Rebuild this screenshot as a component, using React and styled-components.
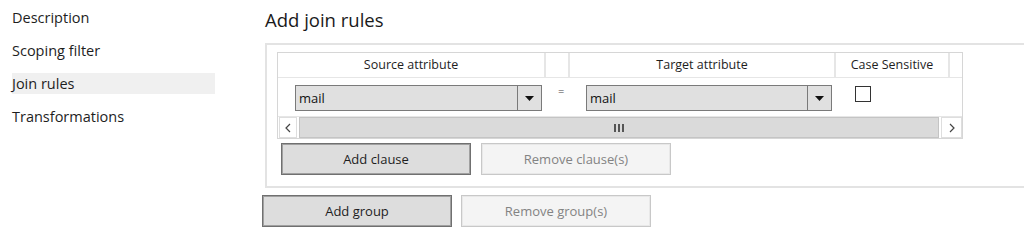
import React from 'react'
import styled, { createGlobalStyle } from 'styled-components'

const GlobalStyle = createGlobalStyle`
  body {
    margin: 0;
    background: #ffffff;
    font-family: "Open Sans", "Noto Sans", sans-serif;
    color: #1e1e1e;
  }
`

const navItems = ['Description', 'Scoping filter', 'Join rules', 'Transformations']

function Combo({ value }) {
  return (
    <ComboBox>
      <span>{value}</span>
      <ComboArrow>
        <svg width="9" height="5" viewBox="0 0 9 5">
          <path d="M0 0 H9 L4.5 5 Z" fill="#111" />
        </svg>
      </ComboArrow>
    </ComboBox>
  )
}

function App() {
  return (
    <Page>
      <GlobalStyle />
      <Sidebar>
        {navItems.map(item => (
          <NavItem key={item} active={item === 'Join rules'}>{item}</NavItem>
        ))}
      </Sidebar>
      <Main>
        <Title>Add join rules</Title>
        <GroupBox>
          <Grid>
            <HeaderRow>
              <HeaderCell>Source attribute</HeaderCell>
              <HeaderCell />
              <HeaderCell>Target attribute</HeaderCell>
              <HeaderCell>Case Sensitive</HeaderCell>
              <HeaderCell />
            </HeaderRow>
            <DataRow>
              <SourceCell><Combo value="mail" /></SourceCell>
              <EqualsCell>=</EqualsCell>
              <TargetCell><Combo value="mail" /></TargetCell>
              <CheckCell><CheckBox /></CheckCell>
            </DataRow>
            <ScrollBar>
              <ScrollButton>
                <svg width="6" height="10" viewBox="0 0 6 10">
                  <path d="M5 1 L1 5 L5 9" fill="none" stroke="#444" strokeWidth="1.2" />
                </svg>
              </ScrollButton>
              <Thumb>
                <Grip><i /><i /><i /></Grip>
              </Thumb>
              <ScrollButton>
                <svg width="6" height="10" viewBox="0 0 6 10">
                  <path d="M1 1 L5 5 L1 9" fill="none" stroke="#444" strokeWidth="1.2" />
                </svg>
              </ScrollButton>
            </ScrollBar>
          </Grid>
          <ButtonRow>
            <Button>Add clause</Button>
            <Button disabled>Remove clause(s)</Button>
          </ButtonRow>
        </GroupBox>
        <OuterButtons>
          <Button>Add group</Button>
          <Button disabled>Remove group(s)</Button>
        </OuterButtons>
      </Main>
    </Page>
  )
}

export default App

export const Page = styled.div`
  display: flex;
  width: 1024px;
  height: 252px;
  overflow: hidden;
`
export const Sidebar = styled.nav`
  width: 203px;
  margin-left: 12px;
  padding-top: 7px;
  display: flex;
  flex-direction: column;
  gap: 12px;
`
export const NavItem = styled.div`
  height: 21px;
  line-height: 21px;
  font-size: 14.5px;
  background: ${p => (p.active ? '#f0f0f0' : 'transparent')};
`
export const Main = styled.div`
  margin-left: 47px;
  flex: 1;
  display: flex;
  flex-direction: column;
`
export const Title = styled.h1`
  margin: 8px 0 0 3px;
  height: 24px;
  line-height: 24px;
  font-size: 18.5px;
  font-weight: 400;
  color: #1a1a1a;
`
export const GroupBox = styled.div`
  margin: 11px -2px 0 3px;
  border: 2px solid #e3e3e3;
  border-right: none;
  padding: 7px 0 11px 10px;
`
export const Grid = styled.div`
  width: 684px;
  border: 1px solid #d6d6d6;
  background: #fff;
`
export const HeaderRow = styled.div`
  display: grid;
  grid-template-columns: 268px 24px 266px 114px 1fr;
  height: 24px;
  border-bottom: 1px solid #e6e6e6;
`
export const HeaderCell = styled.div`
  border-right: 2px solid #e6e6e6;
  font-size: 12.5px;
  line-height: 24px;
  text-align: center;
  color: #1e1e1e;
  &:last-child {
    border-right: none;
  }
`
export const DataRow = styled.div`
  display: grid;
  grid-template-columns: 268px 24px 266px 1fr;
  height: 38px;
`
export const SourceCell = styled.div`
  padding: 7px 4px 0 17px;
`
export const TargetCell = styled.div`
  padding: 7px 4px 0 16px;
`
export const EqualsCell = styled.div`
  font-size: 11px;
  line-height: 14px;
  padding-top: 6px;
  padding-left: 12px;
  color: #444;
`
export const CheckCell = styled.div`
  padding: 8px 0 0 19px;
`
export const CheckBox = styled.div`
  width: 14px;
  height: 14px;
  border: 1px solid #333;
  background: #fff;
`
export const ComboBox = styled.div`
  display: flex;
  height: 24px;
  border: 1px solid #7a7a7a;
  background: #e0e0e0;
  font-size: 13px;
  line-height: 24px;
  color: #111;
  span {
    flex: 1;
    padding-left: 3px;
  }
`
export const ComboArrow = styled.div`
  width: 23px;
  border-left: 1px solid #7a7a7a;
  display: flex;
  align-items: center;
  justify-content: center;
`
export const ScrollBar = styled.div`
  display: flex;
  gap: 2px;
  height: 21px;
  padding: 0 0 0 1px;
  border-top: 1px solid #e6e6e6;
`
export const ScrollButton = styled.div`
  width: 18px;
  display: flex;
  align-items: center;
  justify-content: center;
  background: #fff;
  border: 1px solid #dedede;
  box-sizing: border-box;
  &:last-child {
    width: 21px;
  }
`
export const Thumb = styled.div`
  flex: 1;
  background: #dadada;
  border: 1px solid #c4c4c4;
  display: flex;
  align-items: center;
  justify-content: center;
`
export const Grip = styled.div`
  display: flex;
  gap: 2px;
  i {
    width: 2px;
    height: 8px;
    background: #555;
  }
`
export const ButtonRow = styled.div`
  display: flex;
  gap: 10px;
  margin-top: 4px;
  padding-left: 4px;
`
export const OuterButtons = styled.div`
  display: flex;
  gap: 9px;
  margin-top: 7px;
`
export const Button = styled.button`
  width: 190px;
  height: 32px;
  font-family: inherit;
  font-size: 13px;
  background: ${p => (p.disabled ? '#f4f4f4' : '#dddddd')};
  color: ${p => (p.disabled ? '#838383' : '#1e1e1e')};
  border: 1px solid ${p => (p.disabled ? '#c8c8c8' : '#707070')};
  box-shadow: inset 0 0 0 1px ${p => (p.disabled ? '#e8e8e8' : '#a0a0a0')};
  padding: 0;
`
